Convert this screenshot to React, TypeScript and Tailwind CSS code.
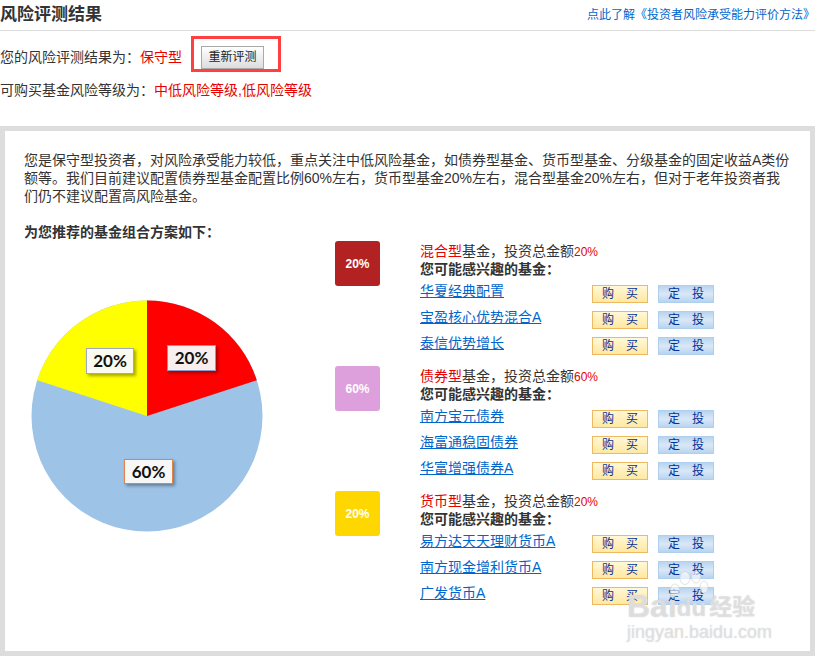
import React from "react";

const funds = [
  {
    color: "bg-[#b22222]",
    percent: "20%",
    type: "混合型",
    names: ["华夏经典配置", "宝盈核心优势混合A", "泰信优势增长"],
  },
  {
    color: "bg-[#dda0dd]",
    percent: "60%",
    type: "债券型",
    names: ["南方宝元债券", "海富通稳固债券", "华富增强债券A"],
  },
  {
    color: "bg-[#ffd700]",
    percent: "20%",
    type: "货币型",
    names: ["易方达天天理财货币A", "南方现金增利货币A", "广发货币A"],
  },
];

function Pie() {
  return (
    <div className="relative mt-[58px] ml-[7px] h-[234px] w-[234px] font-['Lato',sans-serif]">
      <svg width="234" height="234" viewBox="0 0 234 234">
        <circle cx="116" cy="117" r="115.5" fill="#9dc3e6" />
        <path d="M116 117 L116 1.5 A115.5 115.5 0 0 1 225.8 81.3 Z" fill="#ff0000" />
        <path d="M116 117 L116 1.5 A115.5 115.5 0 0 0 6.2 81.3 Z" fill="#ffff00" />
      </svg>
      <span className="absolute left-[136px] top-[46px] flex h-[26px] w-[49px] items-center justify-center border border-[#8e9cc4] bg-[#f8eeee] text-[17px] font-bold text-[#111] shadow-[2px_2px_3px_rgba(0,0,0,0.35)]">
        20%
      </span>
      <span className="absolute left-[55px] top-[49px] flex h-[26px] w-[48px] items-center justify-center border border-[#a0a8c0] bg-[#fafaf0] text-[17px] font-bold text-[#111] shadow-[2px_2px_3px_rgba(0,0,0,0.35)]">
        20%
      </span>
      <span className="absolute left-[93px] top-[160px] flex h-[25px] w-[49px] items-center justify-center border border-[#e0854a] bg-[#f7f7f7] text-[17px] font-bold text-[#111] shadow-[2px_2px_3px_rgba(0,0,0,0.35)]">
        60%
      </span>
    </div>
  );
}

function FundGroup({ fund }: { fund: (typeof funds)[number] }) {
  return (
    <div className="flex h-[125px]">
      <div
        className={`${fund.color} flex h-[45px] w-[45px] items-center justify-center rounded-[3px] text-[12px] font-bold text-white`}
      >
        {fund.percent}
      </div>
      <div className="ml-[40px] text-[14px] leading-[18px]">
        <p className="mt-[1px] text-[#333]">
          <span className="text-[#e60000]">{fund.type}</span>基金，投资总金额
          <span className="text-[12px] text-[#e60000]">{fund.percent}</span>
        </p>
        <p className="-mt-[1px] font-bold text-[#333]">您可能感兴趣的基金：</p>
        <div className="mt-[7px] flex flex-col gap-[8px]">
          {fund.names.map((name) => (
            <div key={name} className="flex h-[18px] w-[294px] items-start">
              <a className="-mt-[3px] w-[172px] text-[#0066cc] underline">{name}</a>
              <button className="flex h-[18px] w-[56px] items-center gap-[12px] border border-[#f0b860] bg-gradient-to-b from-[#fff8d8] to-[#ffe8a0] pl-[9px] text-[12px] leading-[16px] text-[#003399]">
                <span>购</span>
                <span>买</span>
              </button>
              <button className="ml-[10px] flex h-[18px] w-[56px] items-center gap-[12px] border border-[#aed0ee] bg-gradient-to-b from-[#b8d4f0] via-[#d8e8f8] to-[#b8d4f0] pl-[9px] text-[12px] leading-[16px] text-[#003399]">
                <span>定</span>
                <span>投</span>
              </button>
            </div>
          ))}
        </div>
      </div>
    </div>
  );
}

function Watermark() {
  return (
    <div className="pointer-events-none absolute left-[627px] top-[570px] w-[150px] text-white/50 [text-shadow:0_0_1px_#bbb]">
      <svg className="absolute left-[42px] top-0" width="40" height="28" viewBox="0 0 40 28">
        <g fill="#fff" fillOpacity="0.6" stroke="#ccc" strokeWidth="0.6">
          <ellipse cx="6" cy="20" rx="4.5" ry="6" />
          <ellipse cx="16" cy="8" rx="5" ry="6.5" />
          <ellipse cx="27" cy="7" rx="4.5" ry="6" />
          <ellipse cx="35" cy="17" rx="4" ry="6" />
        </g>
      </svg>
      <div className="flex items-end pt-[20px]">
        <span className="font-['Liberation_Sans',sans-serif] text-[32px] font-bold leading-[32px]">Bai</span>
        <span className="font-['Liberation_Sans',sans-serif] text-[24px] font-bold leading-[28px]">du</span>
        <span className="ml-[3px] text-[23px] font-bold leading-[30px]">经验</span>
      </div>
      <div className="font-['Liberation_Sans',sans-serif] text-[18px] leading-[20px]">jingyan.baidu.com</div>
    </div>
  );
}

export default function App() {
  return (
    <div className="relative h-[656px] w-[815px] bg-white font-['Liberation_Sans','Noto_Sans_CJK_SC',sans-serif] text-[14px] text-[#333]">
      <div className="flex h-[31px] items-center justify-between border-b border-[#ddd]">
        <h1 className="text-[17px] font-bold text-[#333]">风险评测结果</h1>
        <a className="text-[12px] text-[#0066cc]">点此了解《投资者风险承受能力评价方法》</a>
      </div>
      <div className="mt-[15px] flex h-[22px] items-center">
        <span>您的风险评测结果为：</span>
        <span className="text-[#e60000]">保守型</span>
        <span className="relative ml-[19px]">
          <button className="block h-[23px] w-[63px] border border-[#aaa] bg-gradient-to-b from-white to-[#ddd] text-[12px] text-[#222]">
            重新评测
          </button>
          <span className="absolute -left-[10px] -top-[10px] h-[36px] w-[90px] border-[3px] border-[#ff4040]" />
        </span>
      </div>
      <div className="mt-[11px] flex h-[22px] items-center">
        <span>可购买基金风险等级为：</span>
        <span className="text-[#e60000]">中低风险等级,低风险等级</span>
      </div>
      <div className="mt-[25px] h-[530px] border-[5px] border-[#ddd] pl-[19px] pt-[20px]">
        <p className="w-[770px] text-[14px] leading-[18px]">
          您是保守型投资者，对风险承受能力较低，重点关注中低风险基金，如债券型基金、货币型基金、分级基金的固定收益A类份额等。我们目前建议配置债券型基金配置比例60%左右，货币型基金20%左右，混合型基金20%左右，但对于老年投资者我们仍不建议配置高风险基金。
        </p>
        <div className="mt-[18px] flex">
          <div className="w-[311px]">
            <h2 className="text-[14px] font-bold leading-[18px] text-[#333]">为您推荐的基金组合方案如下：</h2>
            <Pie />
          </div>
          <div className="pt-[18px]">
            {funds.map((fund) => (
              <FundGroup key={fund.type} fund={fund} />
            ))}
          </div>
        </div>
      </div>
      <Watermark />
    </div>
  );
}
